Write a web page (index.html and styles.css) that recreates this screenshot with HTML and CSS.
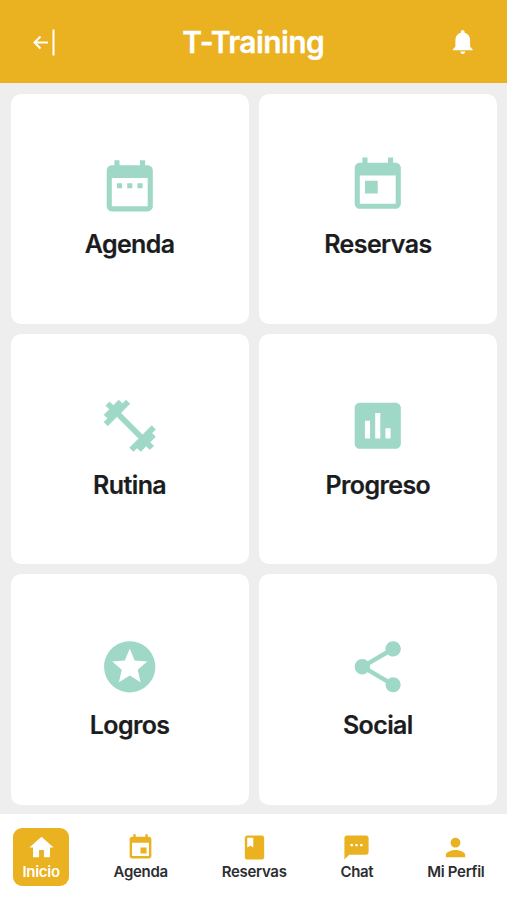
FILE: index.html
```html
<!DOCTYPE html>
<html lang="es">
<head>
<meta charset="utf-8">
<meta name="viewport" content="width=device-width, initial-scale=1">
<title>T-Training</title>
<link rel="stylesheet" href="styles.css">
</head>
<body>
<header class="topbar">
  <svg class="back" viewBox="0 0 24 28" aria-hidden="true"><path d="M16 14.500H2.500M8.500 8.500 2.500 14.500l6 6M21.500 1.500v26"/></svg>
  <h1>T-Training</h1>
  <svg class="bell" viewBox="0 0 24 24" aria-hidden="true"><path d="M12 22c1.100 0 2-.9 2-2h-4c0 1.100.89 2 2 2zm6-6v-5c0-3.070-1.640-5.640-4.500-6.320V4c0-.83-.67-1.500-1.500-1.500s-1.500.67-1.500 1.500v.68C7.630 5.360 6 7.920 6 11v5l-2 2v1h16v-1l-2-2z"/></svg>
</header>
<main class="grid">
  <a class="card"><svg viewBox="0 0 24 24"><path d="M9 11H7v2h2v-2zm4 0h-2v2h2v-2zm4 0h-2v2h2v-2zm2-7h-1V2h-2v2H8V2H6v2H5c-1.110 0-1.990.9-1.990 2L3 20c0 1.100.89 2 2 2h14c1.100 0 2-.9 2-2V6c0-1.100-.9-2-2-2zm0 16H5V9h14v11z"/></svg><span>Agenda</span></a>
  <a class="card"><svg viewBox="0 0 24 24"><path d="M19 3h-1V1h-2v2H8V1H6v2H5c-1.110 0-1.990.9-1.990 2L3 19c0 1.100.89 2 2 2h14c1.100 0 2-.9 2-2V5c0-1.100-.9-2-2-2zm0 16H5V8h14v11zM7 10h5v5H7z"/></svg><span>Reservas</span></a>
  <a class="card"><svg class="dumbbell" viewBox="0 0 24 24"><path d="M20.570 14.860L22 13.430 20.570 12 17 15.570 8.430 7 12 3.430 10.570 2 9.140 3.430 7.710 2 5.570 4.140 4.140 2.710 2.710 4.140l1.430 1.430L2 7.710l1.430 1.430L2 10.570 3.430 12 7 8.430 15.570 17 12 20.570 13.430 22l1.430-1.430L16.290 22l2.140-2.140 1.430 1.430 1.430-1.430-1.430-1.430L22 16.290z"/></svg><span>Rutina</span></a>
  <a class="card"><svg viewBox="0 0 24 24"><path d="M19 3H5c-1.100 0-2 .9-2 2v14c0 1.100.9 2 2 2h14c1.100 0 2-.9 2-2V5c0-1.100-.9-2-2-2zM9 17H7v-7h2v7zm4 0h-2V7h2v10zm4 0h-2v-4h2v4z"/></svg><span>Progreso</span></a>
  <a class="card"><svg viewBox="0 0 24 24"><path d="M11.990 2C6.470 2 2 6.480 2 12s4.470 10 9.990 10C17.520 22 22 17.520 22 12S17.520 2 11.990 2zm4.240 16L12 15.450 7.770 18l1.120-4.810-3.730-3.230 4.920-.42L12 5l1.920 4.530 4.920.42-3.730 3.230L16.230 18z"/></svg><span>Logros</span></a>
  <a class="card"><svg viewBox="0 0 24 24"><path d="M18 16.080c-.76 0-1.440.3-1.960.77L8.910 12.700c.05-.23.09-.46.09-.7s-.04-.47-.09-.7l7.050-4.110c.54.5 1.250.81 2.040.81 1.660 0 3-1.340 3-3s-1.340-3-3-3-3 1.340-3 3c0 .24.04.47.09.7L8.040 9.810C7.500 9.310 6.790 9 6 9c-1.660 0-3 1.340-3 3s1.340 3 3 3c.79 0 1.500-.31 2.040-.81l7.120 4.160c-.05.21-.08.43-.08.65 0 1.610 1.310 2.920 2.920 2.920s2.920-1.310 2.920-2.920-1.310-2.920-2.920-2.920z"/></svg><span>Social</span></a>
</main>
<nav class="tabs">
  <a class="tab active"><svg viewBox="0 0 24 24"><path d="M10 20v-6h4v6h5v-8h3L12 3 2 12h3v8z"/></svg><span>Inicio</span></a>
  <a class="tab"><svg viewBox="0 0 24 24"><path d="M17 12h-5v5h5v-5zM16 1v2H8V1H6v2H5c-1.110 0-1.990.9-1.990 2L3 19c0 1.100.89 2 2 2h14c1.100 0 2-.9 2-2V5c0-1.100-.9-2-2-2h-1V1h-2zm3 18H5V8h14v11z"/></svg><span>Agenda</span></a>
  <a class="tab"><svg viewBox="0 0 24 24"><path fill-rule="evenodd" d="M18 2H6c-1.100 0-2 .9-2 2v16c0 1.100.9 2 2 2h12c1.100 0 2-.9 2-2V4c0-1.100-.9-2-2-2zM6 4h5v8l-2.500-1.500L6 12V4z"/></svg><span>Reservas</span></a>
  <a class="tab"><svg viewBox="0 0 24 24"><path d="M20 2H4c-1.100 0-1.990.9-1.990 2L2 22l4-4h14c1.100 0 2-.9 2-2V4c0-1.100-.9-2-2-2zM9 11H7V9h2v2zm4 0h-2V9h2v2zm4 0h-2V9h2v2z"/></svg><span>Chat</span></a>
  <a class="tab"><svg viewBox="0 0 24 24"><path d="M12 12c2.210 0 4-1.790 4-4s-1.790-4-4-4-4 1.790-4 4 1.790 4 4 4zm0 2c-2.670 0-8 1.340-8 4v2h16v-2c0-2.660-5.330-4-8-4z"/></svg><span>Mi Perfil</span></a>
</nav>
</body>
</html>
```
FILE: styles.css
```css
* { box-sizing: border-box; }
body {
  margin: 0;
  height: 900px;
  display: flex;
  flex-direction: column;
  background: #eee;
  color: #1b1c1e;
  font-family: Inter, "Liberation Sans", sans-serif;
  font-weight: 600;
}
svg { display: block; fill: currentColor; }
.topbar {
  height: 83px;
  padding: 0 30px 0 32px;
  display: flex;
  align-items: center;
  justify-content: space-between;
  background: #eab120;
  color: #fff;
}
.topbar h1 {
  margin: 0 -1px 0 2px;
  font-size: 30px;
  line-height: 36px;
  font-weight: 600;
  letter-spacing: -0.6px;
  -webkit-text-stroke: 0.3px currentColor;
}
.back {
  width: 24px;
  height: 28px;
  fill: none;
  stroke: currentColor;
  stroke-width: 2;
}
.bell { width: 29.500px; height: 29.500px; }
.grid {
  flex: 1;
  display: grid;
  grid-template-columns: 1fr 1fr;
  grid-template-rows: repeat(3, 1fr);
  gap: 10px;
  padding: 11px 10px 9.500px 10.500px;
}
.card {
  display: flex;
  flex-direction: column;
  align-items: center;
  padding-top: 60.500px;
  border-radius: 10px;
  background: #fff;
  font-size: 25px;
  line-height: 32px;
  letter-spacing: -0.6px;
  -webkit-text-stroke: 0.2px currentColor;
}
.card:nth-child(n+3) { padding-top: 61.200px; }
.card svg {
  width: 61.500px;
  height: 61.500px;
  margin-bottom: 12px;
  color: #9fd8c7;
}
.card .dumbbell {
  stroke: currentColor;
  stroke-width: 0.3px;
  stroke-linejoin: round;
}
.tabs {
  height: 86px;
  padding: 14px 13px 0 13px;
  display: flex;
  align-items: flex-start;
  justify-content: space-between;
  background: #fff;
}
.tab {
  display: flex;
  flex-direction: column;
  align-items: center;
  height: 58px;
  padding: 5px 9.500px 0;
  border-radius: 9px;
  color: #2c2d30;
  font-size: 15px;
  line-height: 20px;
  letter-spacing: -0.3px;
}
.tab svg {
  width: 29px;
  height: 29px;
  color: #eab120;
}
.active { background: #eab120; }
.active, .active svg { color: #fff; }
```
